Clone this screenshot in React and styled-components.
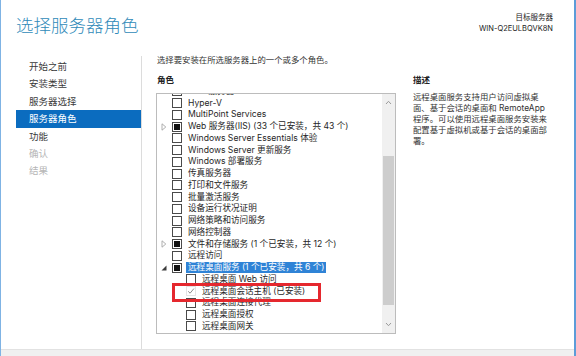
import React from "react";
import styled, { createGlobalStyle } from "styled-components";

const GlobalStyle = createGlobalStyle`
  html, body {
    margin: 0;
    padding: 0;
    background: #fff;
  }
  body {
    width: 576px;
    height: 356px;
    overflow: hidden;
    font-family: Inter, "Noto Sans CJK SC", sans-serif;
    color: #333;
  }
`;

const Window = styled.div`
  width: 576px;
  height: 356px;
  box-sizing: border-box;
  border-left: 1px solid #7fb3e4;
  border-right: 2px solid #5d9cd8;
  background: #fff;
  display: flex;
  flex-direction: column;
`;

const Header = styled.header`
  height: 52px;
  flex: none;
  display: flex;
  justify-content: space-between;
  align-items: flex-start;
  padding: 0 21px 0 15px;
`;

const Title = styled.h1`
  margin: 16px 0 0;
  font-size: 17.5px;
  line-height: 20px;
  font-weight: 300;
  color: #2f8ab9;
`;

const Target = styled.div`
  margin-top: 12px;
  text-align: right;
  font-size: 7.5px;
  line-height: 11px;
  color: #222;
`;

const Body = styled.div`
  flex: 1;
  display: grid;
  grid-template-columns: 141px 1fr;
  min-height: 0;
`;

const Sidebar = styled.nav`
  border-right: 1px solid #dcdcdc;
  padding-top: 2px;
  margin-top: 4px;
`;

const NavItem = styled.div`
  height: 17.4px;
  line-height: 17.4px;
  margin-left: 15px;
  padding-left: 13px;
  font-size: 9.5px;
  color: ${({ $disabled }) => ($disabled ? "#b6b6b6" : "#3a3a3a")};
  background: ${({ $active }) => ($active ? "#0b6cbf" : "transparent")};
  ${({ $active }) => $active && "color: #fff;"}
`;

const Content = styled.section`
  padding: 2px 0 0 15px;
  display: flex;
  flex-direction: column;
`;

const Intro = styled.p`
  margin: 0;
  font-size: 8.4px;
  line-height: 12px;
  color: #333;
`;

const Columns = styled.div`
  margin-top: 8px;
  display: flex;
  gap: 17px;
`;

const Column = styled.div`
  display: flex;
  flex-direction: column;
  width: ${({ $width }) => $width}px;
`;

const Label = styled.div`
  font-size: 8.5px;
  line-height: 12px;
  font-weight: 700;
  color: #222;
`;

const ListBox = styled.div`
  position: relative;
  margin-top: 7px;
  margin-left: -1px;
  height: 241px;
  box-sizing: border-box;
  border: 1px solid #bcbcbc;
  display: flex;
`;

const Rows = styled.div`
  flex: 1;
  overflow: hidden;
`;

const RowsInner = styled.div`
  margin-top: -8.5px;
`;

const Row = styled.div`
  height: 11.75px;
  display: flex;
  align-items: center;
  padding-left: ${({ $level }) => 4 + $level * 14}px;
  font-size: 8.6px;
  white-space: nowrap;
  color: #262626;
`;

const Expander = styled.span`
  width: 9px;
  height: 9px;
  margin-right: 2px;
  flex: none;
  display: flex;
  align-items: center;
`;

const Check = styled.span`
  width: 10px;
  height: 10px;
  box-sizing: border-box;
  flex: none;
  margin-right: 4px;
  border: 1px solid ${({ $state }) => ($state === "checked" ? "#e4e4e4" : "#4a4a4a")};
  background: #fff;
  display: flex;
  align-items: center;
  justify-content: center;
  &::after {
    content: "";
    display: ${({ $state }) => ($state === "partial" ? "block" : "none")};
    width: 6px;
    height: 6px;
    background: #111;
  }
`;

const RowText = styled.span`
  padding: 0 2px;
  line-height: 11px;
  background: ${({ $selected }) => ($selected ? "#2f83d6" : "transparent")};
  color: ${({ $selected }) => ($selected ? "#fff" : "inherit")};
`;

const Scrollbar = styled.div`
  width: 13px;
  flex: none;
  background: #f0f0f0;
  display: flex;
  flex-direction: column;
`;

const ScrollButton = styled.div`
  height: 17px;
  flex: none;
  display: flex;
  align-items: center;
  justify-content: center;
`;

const Track = styled.div`
  flex: 1;
  padding-top: ${({ $offset }) => $offset}px;
`;

const Thumb = styled.div`
  margin: 0 1px;
  background: #cdcdcd;
  height: ${({ $size }) => $size}px;
`;

const Callout = styled.div`
  position: absolute;
  left: 15px;
  top: 189px;
  width: 149px;
  height: 19px;
  box-sizing: border-box;
  border: 3px solid #e5282e;
  pointer-events: none;
`;

const Description = styled.p`
  margin: 6px 0 0;
  font-size: 8.4px;
  line-height: 11px;
  color: #333;
  white-space: nowrap;
`;

const BottomBar = styled.div`
  height: 6px;
  flex: none;
  background: #f0f0f0;
  border-top: 1px solid #e2e2e2;
`;

const steps = [
  { label: "开始之前" },
  { label: "安装类型" },
  { label: "服务器选择" },
  { label: "服务器角色", active: true },
  { label: "功能" },
  { label: "确认", disabled: true },
  { label: "结果", disabled: true },
];

const roles = [
  { label: "DNS 服务器" },
  { label: "Hyper-V" },
  { label: "MultiPoint Services" },
  { label: "Web 服务器(IIS) (33 个已安装，共 43 个)", state: "partial", expander: "closed" },
  { label: "Windows Server Essentials 体验" },
  { label: "Windows Server 更新服务" },
  { label: "Windows 部署服务" },
  { label: "传真服务器" },
  { label: "打印和文件服务" },
  { label: "批量激活服务" },
  { label: "设备运行状况证明" },
  { label: "网络策略和访问服务" },
  { label: "网络控制器" },
  { label: "文件和存储服务 (1 个已安装，共 12 个)", state: "partial", expander: "closed" },
  { label: "远程访问" },
  { label: "远程桌面服务 (1 个已安装，共 6 个)", state: "partial", expander: "open", selected: true },
  { label: "远程桌面 Web 访问", level: 1 },
  { label: "远程桌面会话主机 (已安装)", level: 1, state: "checked" },
  { label: "远程桌面连接代理", level: 1 },
  { label: "远程桌面授权", level: 1 },
  { label: "远程桌面网关", level: 1 },
];

function Arrow({ kind }) {
  if (kind === "closed") {
    return (
      <svg width="6" height="8" viewBox="0 0 6 8">
        <path d="M1 0.8 L4.8 4 L1 7.2 Z" fill="none" stroke="#a6a6a6" strokeWidth="0.9" />
      </svg>
    );
  }
  if (kind === "open") {
    return (
      <svg width="6" height="6" viewBox="0 0 6 6">
        <path d="M5.5 0.5 L5.5 5.5 L0.5 5.5 Z" fill="#3c3c3c" />
      </svg>
    );
  }
  return null;
}

function Chevron({ up }) {
  return (
    <svg width="7" height="5" viewBox="0 0 7 5">
      <path
        d={up ? "M1 4 L3.5 1.3 L6 4" : "M1 1 L3.5 3.7 L6 1"}
        fill="none"
        stroke="#9a9a9a"
        strokeWidth="1"
      />
    </svg>
  );
}

function RoleRow({ role }) {
  return (
    <Row $level={role.level || 0}>
      <Expander>
        <Arrow kind={role.expander} />
      </Expander>
      <Check $state={role.state}>
        {role.state === "checked" && (
          <svg width="8" height="8" viewBox="0 0 8 8">
            <path d="M1.2 4.3 L3.1 6.2 L6.9 1.6" fill="none" stroke="#8c8c8c" strokeWidth="1" />
          </svg>
        )}
      </Check>
      <RowText $selected={role.selected}>{role.label}</RowText>
    </Row>
  );
}

export default function App() {
  return (
    <>
      <GlobalStyle />
      <Window>
        <Header>
          <Title>选择服务器角色</Title>
          <Target>
            <div>目标服务器</div>
            <div>WIN-Q2EULBQVK8N</div>
          </Target>
        </Header>
        <Body>
          <Sidebar>
            {steps.map((s) => (
              <NavItem key={s.label} $active={s.active} $disabled={s.disabled}>
                {s.label}
              </NavItem>
            ))}
          </Sidebar>
          <Content>
            <Intro>选择要安装在所选服务器上的一个或多个角色。</Intro>
            <Columns>
              <Column $width={239}>
                <Label>角色</Label>
                <ListBox>
                  <Rows>
                    <RowsInner>
                      {roles.map((r) => (
                        <RoleRow key={r.label} role={r} />
                      ))}
                    </RowsInner>
                  </Rows>
                  <Scrollbar>
                    <ScrollButton>
                      <Chevron up />
                    </ScrollButton>
                    <Track $offset={45}>
                      <Thumb $size={149} />
                    </Track>
                    <ScrollButton>
                      <Chevron />
                    </ScrollButton>
                  </Scrollbar>
                  <Callout />
                </ListBox>
              </Column>
              <Column $width={158}>
                <Label>描述</Label>
                <Description>
                  远程桌面服务支持用户访问虚拟桌
                  <br />
                  面、基于会话的桌面和 RemoteApp
                  <br />
                  程序。可以使用远程桌面服务安装来
                  <br />
                  配置基于虚拟机或基于会话的桌面部
                  <br />
                  署。
                </Description>
              </Column>
            </Columns>
          </Content>
        </Body>
        <BottomBar />
      </Window>
    </>
  );
}
